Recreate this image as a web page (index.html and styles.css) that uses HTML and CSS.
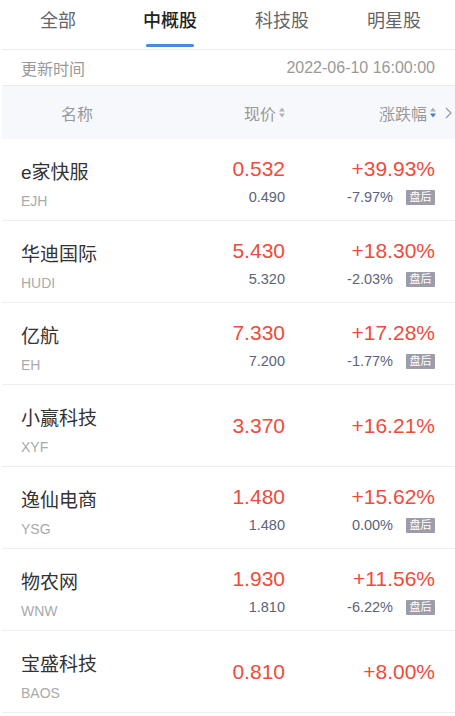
FILE: index.html
```html
<!DOCTYPE html>
<html lang="zh-CN">
<head>
    <meta charset="UTF-8">
    <meta name="viewport" content="width=device-width, initial-scale=1.0">
    <title>中概股</title>
    <link rel="stylesheet" href="styles.css">
</head>
<body>
    <div class="tabs">
        <div class="tab">全部</div>
        <div class="tab active">中概股<span class="bar"></span></div>
        <div class="tab">科技股</div>
        <div class="tab">明星股</div>
    </div>

    <div class="update">
        <span>更新时间</span>
        <span class="num">2022-06-10 16:00:00</span>
    </div>

    <div class="row head">
        <div class="col-name">名称</div>
        <div class="col-price">现价
            <svg class="sort" width="6" height="11" viewBox="0 0 6 11"><path d="M3 0.5L6 4.5H0Z" fill="#b3b3b3"/><path d="M3 10.5L6 6.5H0Z" fill="#b3b3b3"/></svg>
        </div>
        <div class="col-chg">涨跌幅
            <svg class="sort" width="6" height="11" viewBox="0 0 6 11"><path d="M3 0.5L6 4.5H0Z" fill="#b3b3b3"/><path d="M3 10.5L6 6.5H0Z" fill="#3e7ee6"/></svg>
            <svg class="more" width="7" height="12" viewBox="0 0 7 12"><path d="M1 1L6 6L1 11" fill="none" stroke="#999" stroke-width="1.2"/></svg>
        </div>
    </div>

    <div class="row stock">
        <div class="name"><div class="cn">e家快服</div><div class="code">EJH</div></div>
        <div class="price has-sub"><div class="main">0.532</div><div class="sub">0.490</div></div>
        <div class="chg has-sub"><div class="main">+39.93%</div><div class="sub">-7.97%<span class="tag">盘后</span></div></div>
    </div>
    <div class="row stock">
        <div class="name"><div class="cn">华迪国际</div><div class="code">HUDI</div></div>
        <div class="price has-sub"><div class="main">5.430</div><div class="sub">5.320</div></div>
        <div class="chg has-sub"><div class="main">+18.30%</div><div class="sub">-2.03%<span class="tag">盘后</span></div></div>
    </div>
    <div class="row stock">
        <div class="name"><div class="cn">亿航</div><div class="code">EH</div></div>
        <div class="price has-sub"><div class="main">7.330</div><div class="sub">7.200</div></div>
        <div class="chg has-sub"><div class="main">+17.28%</div><div class="sub">-1.77%<span class="tag">盘后</span></div></div>
    </div>
    <div class="row stock">
        <div class="name"><div class="cn">小赢科技</div><div class="code">XYF</div></div>
        <div class="price"><div class="main">3.370</div></div>
        <div class="chg"><div class="main">+16.21%</div></div>
    </div>
    <div class="row stock">
        <div class="name"><div class="cn">逸仙电商</div><div class="code">YSG</div></div>
        <div class="price has-sub"><div class="main">1.480</div><div class="sub">1.480</div></div>
        <div class="chg has-sub"><div class="main">+15.62%</div><div class="sub">0.00%<span class="tag">盘后</span></div></div>
    </div>
    <div class="row stock">
        <div class="name"><div class="cn">物农网</div><div class="code">WNW</div></div>
        <div class="price has-sub"><div class="main">1.930</div><div class="sub">1.810</div></div>
        <div class="chg has-sub"><div class="main">+11.56%</div><div class="sub">-6.22%<span class="tag">盘后</span></div></div>
    </div>
    <div class="row stock">
        <div class="name"><div class="cn">宝盛科技</div><div class="code">BAOS</div></div>
        <div class="price"><div class="main">0.810</div></div>
        <div class="chg"><div class="main">+8.00%</div></div>
    </div>
</body>
</html>
```

FILE: styles.css
```css
body {
    margin: 0 0 0 2px;
    background: #fff;
    font-family: "Liberation Sans", "Noto Sans CJK SC", sans-serif;
    color: #333;
}
.tabs {
    display: flex;
    height: 49px;
    padding: 0 5px 0 0;
    border-bottom: 1px solid #ebebeb;
}
.tab {
    flex: 1;
    display: flex;
    flex-direction: column;
    align-items: center;
    padding-top: 8px;
    font-size: 18px;
    line-height: 26px;
    color: #666;
}
.tab.active {
    color: #222;
    font-weight: 500;
}
.tab .bar {
    width: 48px;
    height: 3px;
    margin-top: 10px;
    border-radius: 2px;
    background: #4a88e2;
}
.update {
    display: flex;
    justify-content: space-between;
    align-items: center;
    height: 35px;
    padding: 0 20px 0 19px;
    border-bottom: 1px solid #ebebeb;
    font-size: 16px;
    color: #999;
}
.row {
    display: grid;
    grid-template-columns: 1fr 100px 150px;
    align-items: center;
    padding: 0 20px 0 19px;
}
.row.head {
    height: 53px;
    background: #f7f8fc;
    font-size: 16px;
    color: #999;
}
.head .col-name {
    padding-left: 40px;
}
.head .col-price,
.head .col-chg {
    display: flex;
    justify-content: flex-end;
    align-items: center;
}
.head .sort {
    margin-left: 3px;
}
.head .more {
    margin-left: 9px;
    margin-right: -17px;
}
.row.stock {
    height: 81px;
    border-bottom: 1px solid #eeeeee;
}
.name {
    padding-top: 13px;
}
.cn {
    font-size: 19px;
    line-height: 30px;
    color: #333;
}
.code {
    font-size: 14px;
    line-height: 26px;
    color: #aaa;
}
.price,
.chg {
    text-align: right;
}
.has-sub {
    padding-top: 9px;
}
.main {
    font-size: 21px;
    line-height: 26px;
    color: #ef4b3b;
}
.sub {
    display: flex;
    justify-content: flex-end;
    align-items: center;
    font-size: 14.5px;
    line-height: 30px;
    color: #5b6479;
}
.tag {
    margin-left: 13px;
    width: 29px;
    height: 15px;
    line-height: 15px;
    text-align: center;
    font-size: 11px;
    color: #fff;
    background: #9d9cab;
    border-radius: 1px;
}
```
